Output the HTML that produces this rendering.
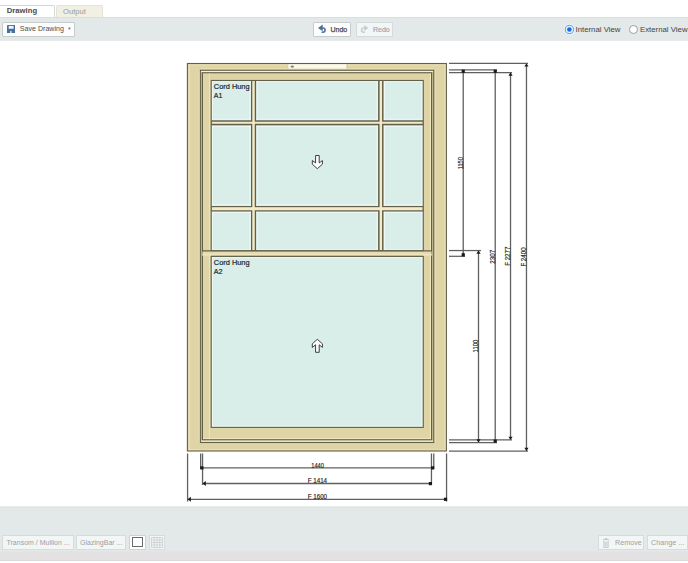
<!DOCTYPE html>
<html><head><meta charset="utf-8">
<style>
html,body{margin:0;padding:0;}
body{width:688px;height:563px;position:relative;overflow:hidden;background:#fff;font-family:"Liberation Sans",sans-serif;}
.a{position:absolute;box-sizing:border-box;}
.tab{top:5px;height:13px;border:1px solid #d3d9d9;border-bottom:none;border-radius:2px 2px 0 0;}
.band{left:0;width:688px;background:#e3e8e8;}
.btn{background:#fdfdfd;border:1px solid #c6cccc;border-radius:1px;}
.dis{background:#f3f6f6;border:1px solid #d6dcdc;}
.t{position:absolute;white-space:nowrap;line-height:1;}
</style></head>
<body>
<!-- tabs -->
<div class="a tab" style="left:-1px;width:56px;background:#fff;border-left-color:#eef0f0;"></div>
<div class="t" style="left:6.8px;top:7px;font-size:7.7px;font-weight:bold;color:#4b4b4b;">Drawing</div>
<div class="a tab" style="left:56px;width:47px;background:#f1f0e2;border-color:#e2e4d8;"></div>
<div class="t" style="left:63px;top:7.5px;font-size:7.6px;color:#9a9a9a;">Output</div>

<!-- top toolbar band -->
<div class="a band" style="top:17px;height:24px;border-top:1px solid #d9dfdf;border-bottom:1px solid #e6eaea;"></div>
<div class="a btn" style="left:2px;top:22px;width:73px;height:15px;"></div>
<svg class="a" style="left:7px;top:24.8px;" width="8.2" height="8.4" viewBox="0 0 8.2 8.4">
  <rect x="0" y="0" width="8.2" height="8.4" rx="0.4" fill="#46709a"/>
  <rect x="1.7" y="0.9" width="4.9" height="2.9" fill="#eef3f8"/>
  <rect x="3.1" y="6" width="1.5" height="2.4" fill="#d6e0ea"/>
</svg>
<div class="t" style="left:19.8px;top:26px;font-size:7.1px;color:#505050;">Save Drawing</div>
<div class="t" style="left:68px;top:25.5px;font-size:7px;color:#555;">*</div>

<div class="a btn" style="left:313px;top:22px;width:38px;height:15px;"></div>
<svg class="a" style="left:314px;top:22px;" width="16" height="14" viewBox="314 22 16 14">
  <path d="M322.7 24.6 L318.0 27.9 L322.7 31.2 Z" fill="#4d6f99"/>
  <path d="M321.2 27.9 H322.9 A2.2 2.2 0 0 1 322.9 32.3 H321.6" fill="none" stroke="#4d6f99" stroke-width="1.5"/>
</svg>
<div class="t" style="left:330.5px;top:26px;font-size:7px;color:#4a4a4a;-webkit-text-stroke:0.25px #4a4a4a;">Undo</div>

<div class="a dis" style="left:356px;top:22px;width:37px;height:15px;"></div>
<svg class="a" style="left:356px;top:22px;" width="16" height="14" viewBox="356 22 16 14">
  <path d="M364.2 24.9 L368.4 27.9 L364.2 30.9 Z" fill="#c9cdcd"/>
  <path d="M365.4 27.9 H363.7 A2.2 2.2 0 0 0 363.7 32.3 H365" fill="none" stroke="#c9cdcd" stroke-width="1.5"/>
</svg>
<div class="t" style="left:373px;top:26px;font-size:7px;color:#a3a7a7;-webkit-text-stroke:0.2px #a3a7a7;">Redo</div>

<!-- radios -->
<svg class="a" style="left:563px;top:23px;" width="13" height="13" viewBox="0 0 13 13">
  <circle cx="6.4" cy="6.5" r="5.4" fill="none" stroke="#e4f3fb" stroke-width="1.2"/>
  <circle cx="6.4" cy="6.5" r="4.1" fill="#e8f4fb" stroke="#5f8fd0" stroke-width="0.9"/>
  <circle cx="6.4" cy="6.5" r="2.3" fill="#1a6ae0"/>
</svg>
<div class="t" style="left:575.5px;top:25.5px;font-size:7.8px;color:#444;">Internal View</div>
<svg class="a" style="left:629px;top:25px;" width="9" height="9" viewBox="0 0 9 9">
  <circle cx="4.5" cy="4.5" r="4" fill="#fff" stroke="#888" stroke-width="0.8"/>
</svg>
<div class="t" style="left:640px;top:25.5px;font-size:7.8px;color:#444;">External View</div>

<!-- drawing -->
<svg class="a" style="left:0;top:0;" width="688" height="563" viewBox="0 0 688 563" id="drw">
<g font-family="Liberation Sans">
<rect x="187.40" y="63.50" width="259.00" height="387.50" fill="#dfd4a6"/>
<path d="M189.30 64.50V450.00" stroke="#e8dfb3" stroke-width="1.2"/>
<path d="M188.40 65.00H445.40" stroke="#f2e9c0" stroke-width="1.0" stroke-opacity="0.6"/>
<path d="M445.20 64.50V450.00" stroke="#f2e9c0" stroke-width="1.0" stroke-opacity="0.9"/>
<path d="M188.40 449.90H445.40" stroke="#f2e9c0" stroke-width="1.0" stroke-opacity="0.8"/>
<rect x="187.40" y="63.50" width="259.00" height="387.50" fill="none" stroke="#625f4a" stroke-width="1.1"/>
<path d="M199.40 70.25V442.50" stroke="#f6eec9" stroke-width="1.0"/>
<path d="M200.35 68.90H433.74" stroke="#f2e9c0" stroke-width="1.0" stroke-opacity="0.7"/>
<path d="M435.00 70.25V442.50" stroke="#f2e9c0" stroke-width="1.0" stroke-opacity="0.8"/>
<rect x="200.35" y="70.25" width="233.39" height="372.25" fill="#ddd3a8"/>
<path d="M201.40 70.25V442.50" stroke="#c2b98f" stroke-width="1.0"/>
<path d="M432.65 70.25V442.50" stroke="#c8bf95" stroke-width="1.0"/>
<path d="M200.35 71.50H433.74" stroke="#faf3cf" stroke-width="1.2"/>
<path d="M200.35 441.15H433.74" stroke="#f8f0c8" stroke-width="1.2"/>
<rect x="202.44" y="72.75" width="229.12" height="367.00" fill="#dfd4a6"/>
<rect x="200.35" y="70.25" width="233.39" height="372.25" fill="none" stroke="#625f4a" stroke-width="1.1"/>
<rect x="202.44" y="72.75" width="229.12" height="367.00" fill="none" stroke="#625f4a" stroke-width="1.1"/>
<path d="M209.40 73.35V439.15" stroke="#f2e9c0" stroke-width="1.0" stroke-opacity="0.8"/>
<path d="M430.47 73.35V439.15" stroke="#f2e9c0" stroke-width="1.0" stroke-opacity="0.9"/>
<path d="M203.04 438.50H430.96" stroke="#f2e9c0" stroke-width="1.0" stroke-opacity="0.8"/>
<rect x="211.20" y="80.46" width="212.07" height="170.39" fill="#d9ede9"/>
<rect x="211.20" y="256.30" width="212.07" height="171.10" fill="#d9ede9"/>
<path d="M212.50 80.46V250.85" stroke="#effaf8" stroke-width="1.0" stroke-opacity="0.8"/>
<path d="M421.77 80.46V250.85" stroke="#effaf8" stroke-width="1.0" stroke-opacity="0.8"/>
<path d="M211.20 81.66H423.27" stroke="#effaf8" stroke-width="1.0" stroke-opacity="0.7"/>
<path d="M211.20 249.65H423.27" stroke="#effaf8" stroke-width="1.0" stroke-opacity="0.8"/>
<path d="M212.50 256.30V427.40" stroke="#effaf8" stroke-width="1.0" stroke-opacity="0.8"/>
<path d="M421.77 256.30V427.40" stroke="#effaf8" stroke-width="1.0" stroke-opacity="0.8"/>
<path d="M211.20 257.50H423.27" stroke="#effaf8" stroke-width="1.0" stroke-opacity="0.7"/>
<path d="M211.20 426.20H423.27" stroke="#effaf8" stroke-width="1.0" stroke-opacity="0.8"/>
<path d="M250.00 80.46V250.85" stroke="#effaf8" stroke-width="1.0" stroke-opacity="0.9"/>
<path d="M257.10 80.46V250.85" stroke="#effaf8" stroke-width="1.0" stroke-opacity="0.9"/>
<path d="M377.10 80.46V250.85" stroke="#effaf8" stroke-width="1.0" stroke-opacity="0.9"/>
<path d="M384.50 80.46V250.85" stroke="#effaf8" stroke-width="1.0" stroke-opacity="0.9"/>
<path d="M211.20 119.20H423.27" stroke="#effaf8" stroke-width="1.0" stroke-opacity="0.9"/>
<path d="M211.20 126.40H423.27" stroke="#effaf8" stroke-width="1.0" stroke-opacity="0.9"/>
<path d="M211.20 204.90H423.27" stroke="#effaf8" stroke-width="1.0" stroke-opacity="0.9"/>
<path d="M211.20 212.60H423.27" stroke="#effaf8" stroke-width="1.0" stroke-opacity="0.9"/>
<rect x="251.00" y="80.46" width="5.10" height="170.39" fill="#625f4a"/>
<rect x="378.10" y="80.46" width="5.40" height="170.39" fill="#625f4a"/>
<rect x="211.20" y="120.30" width="212.07" height="5.00" fill="#625f4a"/>
<rect x="211.20" y="206.00" width="212.07" height="5.50" fill="#625f4a"/>
<rect x="252.30" y="80.96" width="2.45" height="169.39" fill="#f3ebc8"/>
<rect x="379.60" y="80.96" width="2.45" height="169.39" fill="#f3ebc8"/>
<rect x="211.70" y="121.75" width="211.07" height="2.01" fill="#f3ebc8"/>
<rect x="211.70" y="207.18" width="211.07" height="3.08" fill="#f3ebc8"/>
<rect x="211.20" y="80.46" width="212.07" height="170.39" fill="none" stroke="#625f4a" stroke-width="1.1"/>
<rect x="211.20" y="256.30" width="212.07" height="171.10" fill="none" stroke="#625f4a" stroke-width="1.1"/>
<rect x="202.44" y="251.35" width="229.12" height="4.45" fill="#e6dcb0"/>
<path d="M202.44 254.60H431.56" stroke="#efe6bd" stroke-width="1.2"/>
<path d="M202.44 250.85H431.56" stroke="#625f4a" stroke-width="1.4"/>
<path d="M211.20 256.30H423.27" stroke="#625f4a" stroke-width="1.1"/>
<rect x="287.50" y="64.30" width="59.50" height="4.20" fill="#fbf9ef"/>
<path d="M287.80 64.30V68.50" stroke="#b5ad8a" stroke-width="0.6"/>
<path d="M346.80 64.30V68.50" stroke="#b5ad8a" stroke-width="0.6"/>
<ellipse cx="292.3" cy="66.6" rx="1.8" ry="1.1" fill="#808080"/>
<text x="213.8" y="89.2" font-size="7.9" text-anchor="start" fill="#262b2b" stroke="#262b2b" stroke-width="0.22" textLength="35.8" lengthAdjust="spacingAndGlyphs">Cord Hung</text>
<text x="213.8" y="98.3" font-size="7.9" text-anchor="start" fill="#262b2b" stroke="#262b2b" stroke-width="0.22" textLength="8.6" lengthAdjust="spacingAndGlyphs">A1</text>
<text x="213.8" y="265.2" font-size="7.9" text-anchor="start" fill="#262b2b" stroke="#262b2b" stroke-width="0.22" textLength="35.8" lengthAdjust="spacingAndGlyphs">Cord Hung</text>
<text x="213.8" y="274.3" font-size="7.9" text-anchor="start" fill="#262b2b" stroke="#262b2b" stroke-width="0.22" textLength="8.8" lengthAdjust="spacingAndGlyphs">A2</text>
<path d="M315.6 155.5H319.2V162.9L322.4 160.6V164.2L317.3 168.7L312.3 164.2V160.6L315.6 162.9Z" fill="#fff" stroke="#2a2a2a" stroke-width="0.9" stroke-linejoin="miter"/>
<path d="M315.6 352.3H319.2V344.8L322.4 347.4V343.8L317.3 339.3L312.3 343.8V347.4L315.6 344.8Z" fill="#fff" stroke="#2a2a2a" stroke-width="0.9" stroke-linejoin="miter"/>
<path d="M449.00 63.40H528.00" stroke="#606060" stroke-width="1.25"/>
<path d="M449.00 69.80H497.00" stroke="#606060" stroke-width="1.25"/>
<path d="M449.00 72.50H512.00" stroke="#606060" stroke-width="1.25"/>
<path d="M449.00 250.55H481.00" stroke="#606060" stroke-width="1.25"/>
<path d="M449.00 256.30H465.00" stroke="#606060" stroke-width="1.25"/>
<path d="M449.00 439.84H512.00" stroke="#606060" stroke-width="1.25"/>
<path d="M449.00 442.55H497.00" stroke="#606060" stroke-width="1.25"/>
<path d="M449.00 451.00H528.00" stroke="#606060" stroke-width="1.25"/>
<path d="M463.23 69.80V256.30" stroke="#606060" stroke-width="1.3"/>
<rect x="461.63" y="69.70" width="3.20" height="3.20" fill="#1a1a1a"/>
<rect x="461.63" y="253.20" width="3.20" height="3.20" fill="#1a1a1a"/>
<path d="M478.50 250.55V442.55" stroke="#606060" stroke-width="1.3"/>
<path d="M476.40 253.75L478.50 250.55L480.60 253.75Z" fill="#1a1a1a"/>
<path d="M476.40 439.35L478.50 442.55L480.60 439.35Z" fill="#1a1a1a"/>
<path d="M495.23 69.80V442.55" stroke="#606060" stroke-width="1.3"/>
<rect x="493.63" y="69.70" width="3.20" height="3.20" fill="#1a1a1a"/>
<rect x="493.63" y="439.45" width="3.20" height="3.20" fill="#1a1a1a"/>
<path d="M510.52 72.50V439.84" stroke="#606060" stroke-width="1.3"/>
<path d="M508.42 75.70L510.52 72.50L512.62 75.70Z" fill="#1a1a1a"/>
<path d="M508.42 436.64L510.52 439.84L512.62 436.64Z" fill="#1a1a1a"/>
<path d="M526.47 63.40V451.00" stroke="#606060" stroke-width="1.3"/>
<path d="M524.37 66.60L526.47 63.40L528.57 66.60Z" fill="#1a1a1a"/>
<path d="M524.37 447.80L526.47 451.00L528.57 447.80Z" fill="#1a1a1a"/>
<text x="462.6" y="163.2" font-size="6.8" text-anchor="middle" fill="#222" transform="rotate(-90 462.6 163.2)" stroke="#222" stroke-width="0.15" textLength="12.3" lengthAdjust="spacingAndGlyphs">1150</text>
<text x="478.4" y="346.0" font-size="6.8" text-anchor="middle" fill="#222" transform="rotate(-90 478.4 346.0)" stroke="#222" stroke-width="0.15" textLength="12.8" lengthAdjust="spacingAndGlyphs">1100</text>
<text x="494.6" y="256.8" font-size="6.8" text-anchor="middle" fill="#222" transform="rotate(-90 494.6 256.8)" stroke="#222" stroke-width="0.15" textLength="14.0" lengthAdjust="spacingAndGlyphs">2307</text>
<text x="509.9" y="256.2" font-size="6.8" text-anchor="middle" fill="#222" transform="rotate(-90 509.9 256.2)" stroke="#222" stroke-width="0.15" textLength="19.2" lengthAdjust="spacingAndGlyphs">F 2277</text>
<text x="525.9" y="257.0" font-size="6.8" text-anchor="middle" fill="#222" transform="rotate(-90 525.9 257.0)" stroke="#222" stroke-width="0.15" textLength="19.2" lengthAdjust="spacingAndGlyphs">F 2400</text>
<path d="M187.58 453.50V501.50" stroke="#606060" stroke-width="1.3"/>
<path d="M200.63 453.50V469.00" stroke="#606060" stroke-width="1.3"/>
<path d="M202.55 453.50V485.00" stroke="#606060" stroke-width="1.3"/>
<path d="M431.45 453.50V485.00" stroke="#606060" stroke-width="1.3"/>
<path d="M433.76 453.50V469.00" stroke="#606060" stroke-width="1.3"/>
<path d="M446.55 453.50V501.50" stroke="#606060" stroke-width="1.3"/>
<path d="M200.63 467.80H433.76" stroke="#606060" stroke-width="1.3"/>
<rect x="200.30" y="466.30" width="3.20" height="3.20" fill="#1a1a1a"/>
<rect x="431.00" y="466.30" width="3.20" height="3.20" fill="#1a1a1a"/>
<path d="M202.55 483.50H431.45" stroke="#606060" stroke-width="1.3"/>
<path d="M205.80 481.10L202.60 483.60L205.80 486.10Z" fill="#1a1a1a"/>
<rect x="428.80" y="482.00" width="3.20" height="3.20" fill="#1a1a1a"/>
<path d="M187.58 499.30H446.55" stroke="#606060" stroke-width="1.3"/>
<path d="M190.90 496.80L187.70 499.30L190.90 501.80Z" fill="#1a1a1a"/>
<rect x="443.90" y="497.70" width="3.20" height="3.20" fill="#1a1a1a"/>
<text x="317.6" y="467.6" font-size="6.8" text-anchor="middle" fill="#222" stroke="#222" stroke-width="0.15" textLength="12.8" lengthAdjust="spacingAndGlyphs">1440</text>
<text x="317.4" y="483.2" font-size="6.8" text-anchor="middle" fill="#222" stroke="#222" stroke-width="0.15" textLength="19.2" lengthAdjust="spacingAndGlyphs">F 1414</text>
<text x="317.4" y="499.0" font-size="6.8" text-anchor="middle" fill="#222" stroke="#222" stroke-width="0.15" textLength="19.2" lengthAdjust="spacingAndGlyphs">F 1600</text>
</g>
</svg>

<!-- bottom band -->
<div class="a band" style="top:506px;height:46px;border-top:1px solid #e8ecec;"></div>
<div class="a" style="left:0;top:507px;width:688px;height:1px;background:#dde3e3;"></div>
<div class="a" style="left:0;top:551px;width:688px;height:1px;background:#e3e5e5;"></div>
<div class="a" style="left:0;top:552px;width:688px;height:8px;background:#e3e1e1;"></div>
<div class="a" style="left:0;top:560px;width:688px;height:1px;background:#d9d9d9;"></div>

<div class="a dis" style="left:2px;top:535px;width:72px;height:15px;"></div>
<div class="t" style="left:6.5px;top:539px;font-size:7px;color:#9c9f9f;">Transom / Mullion ...</div>
<div class="a dis" style="left:76px;top:535px;width:50px;height:15px;"></div>
<div class="t" style="left:80px;top:539px;font-size:7px;color:#9c9f9f;">GlazingBar ...</div>
<div class="a btn" style="left:129px;top:535px;width:17px;height:15px;background:#fff;border-color:#ccd2d2;"></div>
<div class="a" style="left:132px;top:537px;width:11px;height:10px;border:1px solid #6a6a6a;"></div>
<div class="a dis" style="left:149px;top:535px;width:16px;height:15px;background:#f3f6f6;"></div>
<svg class="a" style="left:151px;top:537px;" width="12" height="11" viewBox="0 0 12 11">
  <path d="M0.5 0.5H11.5V10.5H0.5Z M3.25 0.5V10.5 M6 0.5V10.5 M8.75 0.5V10.5 M0.5 3H11.5 M0.5 5.5H11.5 M0.5 8H11.5" fill="none" stroke="#c4c8c8" stroke-width="0.7"/>
</svg>

<div class="a dis" style="left:598px;top:535px;width:46px;height:15px;"></div>
<svg class="a" style="left:602px;top:538px;" width="8" height="10" viewBox="0 0 8 10">
  <path d="M1 1.5H7 M3 1V0.5H5V1 M1.8 2.5V9.5H6.2V2.5 M3.2 3.5V8.5 M4.8 3.5V8.5" fill="none" stroke="#c3c7c7" stroke-width="0.9"/>
</svg>
<div class="t" style="left:615px;top:539px;font-size:7.2px;color:#9c9f9f;">Remove</div>
<div class="a dis" style="left:647px;top:535px;width:41px;height:15px;"></div>
<div class="t" style="left:651px;top:539px;font-size:7.2px;color:#9c9f9f;">Change ...</div>
</body></html>
